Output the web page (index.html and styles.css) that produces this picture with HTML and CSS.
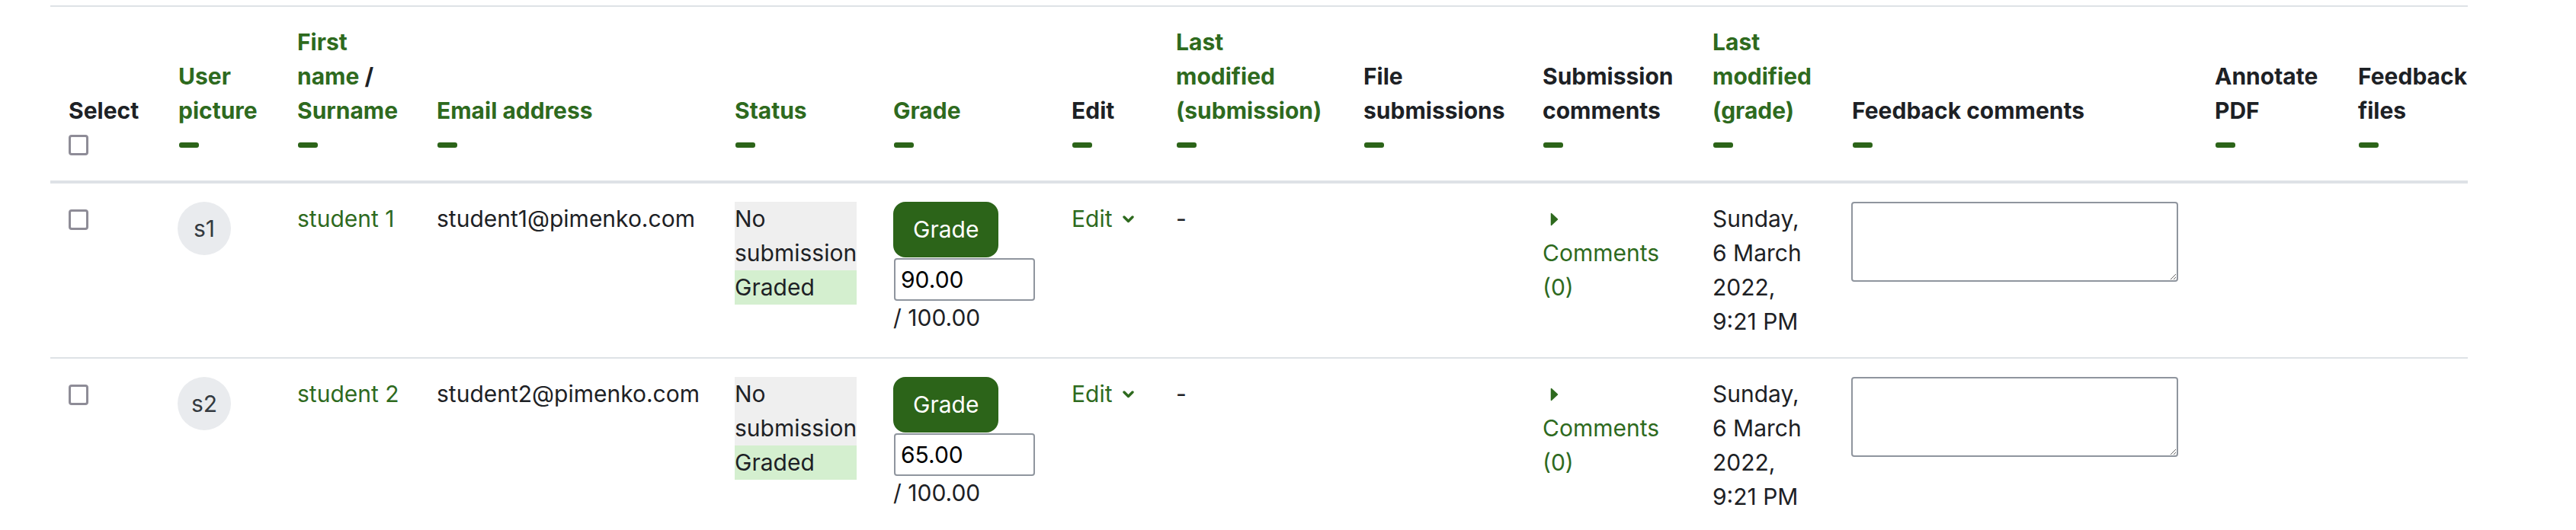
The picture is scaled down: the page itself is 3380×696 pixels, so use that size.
FILE: index.html
```html
<!DOCTYPE html>
<html>

<head>
	<title>Assignment - grading</title>
	<link rel="stylesheet" href="styles.css">
</head>

<body>
	<div id="gradingTable">
		<table class="generaltable">
			<colgroup>
				<col class="w-select">
				<col class="w-picture">
				<col class="w-name">
				<col class="w-email">
				<col class="w-status">
				<col class="w-grade">
				<col class="w-edit">
				<col class="w-modified">
				<col class="w-files">
				<col class="w-comments">
				<col class="w-modgrade">
				<col class="w-feedback">
				<col class="w-annotate">
				<col class="w-fbfiles">
			</colgroup>
			<thead>
				<tr>
					<th>Select<div class="commands"><input type="checkbox" class="check"></div></th>
					<th><a href="#">User<br>picture</a><div class="commands"><span class="hide-icon"></span></div></th>
					<th><a href="#">First<br>name</a> /<br><a href="#">Surname</a><div class="commands"><span class="hide-icon"></span></div></th>
					<th><a href="#">Email address</a><div class="commands"><span class="hide-icon"></span></div></th>
					<th><a href="#">Status</a><div class="commands"><span class="hide-icon"></span></div></th>
					<th><a href="#">Grade</a><div class="commands"><span class="hide-icon"></span></div></th>
					<th>Edit<div class="commands"><span class="hide-icon"></span></div></th>
					<th><a href="#">Last<br>modified<br>(submission)</a><div class="commands"><span class="hide-icon"></span></div></th>
					<th>File<br>submissions<div class="commands"><span class="hide-icon"></span></div></th>
					<th>Submission<br>comments<div class="commands"><span class="hide-icon"></span></div></th>
					<th><a href="#">Last<br>modified<br>(grade)</a><div class="commands"><span class="hide-icon"></span></div></th>
					<th>Feedback comments<div class="commands"><span class="hide-icon"></span></div></th>
					<th>Annotate<br>PDF<div class="commands"><span class="hide-icon"></span></div></th>
					<th class="last">Feedback<br>files<div class="commands"><span class="hide-icon"></span></div></th>
				</tr>
			</thead>
			<tbody>
				<tr>
					<td><input type="checkbox" class="check row-check"></td>
					<td><span class="userinitials">s1</span></td>
					<td><a href="#">student 1</a></td>
					<td>student1@pimenko.com</td>
					<td>
						<div class="status-new">No submission</div>
						<div class="status-graded">Graded</div>
					</td>
					<td>
						<button class="btn-grade">Grade</button>
						<input type="text" class="quickgrade" value="90.00">
						<div>/ 100.00</div>
					</td>
					<td><a href="#" class="edit-menu">Edit<svg width="15" height="10" viewBox="0 0 15 10"><polyline points="2,2 7.5,7.5 13,2" fill="none" stroke="currentColor" stroke-width="3.4" stroke-linecap="round" stroke-linejoin="round"/></svg></a></td>
					<td>-</td>
					<td></td>
					<td>
						<div class="comment-toggle"><svg width="11" height="18" viewBox="0 0 11 18"><path d="M1.5 1.5 L9.5 9 L1.5 16.5 Z" fill="currentColor" stroke="currentColor" stroke-width="1.5" stroke-linejoin="round"/></svg></div>
						<a href="#">Comments<br>(0)</a>
					</td>
					<td>Sunday,<br>6 March<br>2022,<br>9:21 PM</td>
					<td><textarea class="feedback"></textarea></td>
					<td></td>
					<td class="last"></td>
				</tr>
				<tr>
					<td><input type="checkbox" class="check row-check"></td>
					<td><span class="userinitials">s2</span></td>
					<td><a href="#">student 2</a></td>
					<td>student2@pimenko.com</td>
					<td>
						<div class="status-new">No submission</div>
						<div class="status-graded">Graded</div>
					</td>
					<td>
						<button class="btn-grade">Grade</button>
						<input type="text" class="quickgrade" value="65.00">
						<div>/ 100.00</div>
					</td>
					<td><a href="#" class="edit-menu">Edit<svg width="15" height="10" viewBox="0 0 15 10"><polyline points="2,2 7.5,7.5 13,2" fill="none" stroke="currentColor" stroke-width="3.4" stroke-linecap="round" stroke-linejoin="round"/></svg></a></td>
					<td>-</td>
					<td></td>
					<td>
						<div class="comment-toggle"><svg width="11" height="18" viewBox="0 0 11 18"><path d="M1.5 1.5 L9.5 9 L1.5 16.5 Z" fill="currentColor" stroke="currentColor" stroke-width="1.5" stroke-linejoin="round"/></svg></div>
						<a href="#">Comments<br>(0)</a>
					</td>
					<td>Sunday,<br>6 March<br>2022,<br>9:21 PM</td>
					<td><textarea class="feedback"></textarea></td>
					<td></td>
					<td class="last"></td>
				</tr>
			</tbody>
		</table>
	</div>
</body>

</html>
```

FILE: styles.css
```css
:root {
	--text: #1d2125;
	--link: #2e6a1e;
	--brand: #2c6419;
	--border: #dee2e6;
	--input-border: #8f959e;
	--check-border: #8e8c97;
}

html,
body {
	overflow: hidden;
}

body {
	margin: 0;
	background-color: #fff;
	color: var(--text);
	font-family: Inter, 'Noto Sans', sans-serif;
	font-size: 30px;
	line-height: 45px;
}

a {
	color: var(--link);
	text-decoration: none;
}

#gradingTable {
	margin: 7px 0 0 66px;
	width: 3172px;
	overflow: hidden;
}

table {
	border-collapse: separate;
	border-spacing: 0;
	table-layout: fixed;
	width: 3172px;
}

.w-select { width: 144px; }
.w-picture { width: 156px; }
.w-name { width: 183px; }
.w-email { width: 391px; }
.w-status { width: 208px; }
.w-grade { width: 234px; }
.w-edit { width: 137px; }
.w-modified { width: 246px; }
.w-files { width: 235px; }
.w-comments { width: 223px; }
.w-modgrade { width: 183px; }
.w-feedback { width: 476px; }
.w-annotate { width: 188px; }
.w-fbfiles { width: 168px; }

th,
td {
	padding: 24px;
	text-align: left;
	vertical-align: top;
}

th.last,
td.last {
	padding-right: 0;
}

th {
	vertical-align: bottom;
	font-weight: 700;
	border-top: 2px solid var(--border);
	border-bottom: 4px solid var(--border);
}

td {
	border-bottom: 2px solid var(--border);
}

.commands {
	height: 45px;
	display: flex;
	align-items: center;
}

.hide-icon {
	display: block;
	width: 26px;
	height: 7px;
	margin-left: 1px;
	border-radius: 3px;
	background-color: var(--brand);
}

.check {
	appearance: none;
	display: block;
	box-sizing: border-box;
	width: 26px;
	height: 27px;
	margin: 0;
	border: 3px solid var(--check-border);
	border-radius: 4px;
	background-color: #fff;
}

.row-check {
	margin-top: 10px;
}

.userinitials {
	display: flex;
	align-items: center;
	justify-content: center;
	width: 70px;
	height: 70px;
	margin-left: -1px;
	border-radius: 50%;
	background-color: #e9ebee;
	color: #343a40;
}

.status-new {
	background-color: #efefef;
}

.status-graded {
	background-color: #d4efcf;
}

.btn-grade {
	display: block;
	padding: 12px 24px;
	border: 2px solid var(--brand);
	border-radius: 16px;
	background-color: var(--brand);
	color: #fff;
	font-family: inherit;
	font-size: 30px;
	line-height: 45px;
}

.quickgrade {
	display: block;
	box-sizing: border-box;
	width: 185px;
	height: 56px;
	margin: 1px 0 0 1px;
	padding: 0 7px;
	border: 2px solid var(--input-border);
	border-radius: 4px;
	color: #000;
	font-family: inherit;
	font-size: 30px;
}

.edit-menu {
	display: inline-flex;
	align-items: center;
}

.edit-menu svg {
	margin-left: 14px;
}

.comment-toggle {
	display: flex;
	align-items: center;
	height: 45px;
	padding-left: 10px;
	color: var(--link);
}

.feedback {
	display: block;
	box-sizing: border-box;
	width: 429px;
	height: 105px;
	margin: 0 0 0 -1px;
	border: 2px solid var(--input-border);
	border-radius: 4px;
	font-family: inherit;
	font-size: 30px;
}
```
